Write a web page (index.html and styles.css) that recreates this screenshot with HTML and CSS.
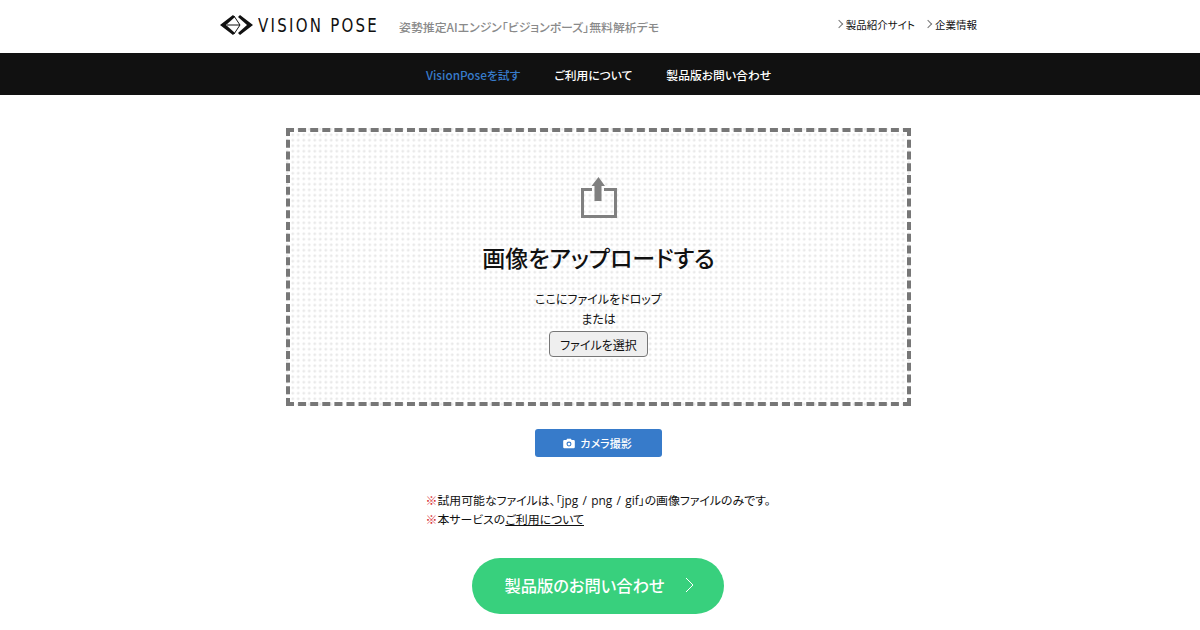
FILE: index.html
```html
<!DOCTYPE html>
<html lang="ja">
<head>
    <meta charset="UTF-8">
    <meta name="viewport" content="width=device-width, initial-scale=1.0">
    <title>VisionPose 無料解析デモ</title>
    <link rel="stylesheet" href="styles.css">
</head>
<body>
    <header class="site-header">
        <div class="header-inner">
            <a class="logo" href="#">
                <svg class="logo-mark" width="33" height="22" viewBox="0 0 33 22">
                    <path d="M0 11 L13 1 L15 3 L6 11 L15 19 L13 21 Z" fill="#111"/>
                    <path d="M20 1 L33 11 L20 21 L18 19 L27 11 L18 3 Z" fill="#111"/>
                    <path d="M14 2 L20 11 L14 20 M7 11 H20" fill="none" stroke="#111" stroke-width="1"/>
                </svg>
                <span class="logo-text">VISION POSE</span>
            </a>
            <p class="tagline">姿勢推定AIエンジン「ビジョンポーズ」無料解析デモ</p>
            <ul class="sub-links">
                <li><a href="#">製品紹介サイト</a></li>
                <li><a href="#">企業情報</a></li>
            </ul>
        </div>
    </header>

    <nav class="global-nav">
        <a class="current" href="#">VisionPoseを試す</a>
        <a href="#">ご利用について</a>
        <a href="#">製品版お問い合わせ</a>
    </nav>

    <main class="content">
        <section class="dropzone">
            <svg class="upload-icon" width="36" height="41" viewBox="0 0 36 41">
                <path d="M11 12.500 H1.500 V39.500 H34.500 V12.500 H23" fill="none" stroke="#808080" stroke-width="3"/>
                <path d="M17.500 0 L24 9 H20.500 V24 H13.500 V9 H10.500 Z" fill="#808080"/>
            </svg>
            <h1>画像をアップロードする</h1>
            <p class="drop-text">ここにファイルをドロップ</p>
            <p class="drop-text">または</p>
            <button class="file-button" type="button">ファイルを選択</button>
        </section>

        <button class="camera-button" type="button">
            <svg width="12" height="11" viewBox="0 0 13 11">
                <path fill-rule="evenodd" fill="#fff" d="M1.500 1.800 H3.600 L4.500 0.300 H8.500 L9.400 1.800 H11.500 A1.300 1.300 0 0 1 12.800 3.100 V9.400 A1.300 1.300 0 0 1 11.500 10.700 H1.500 A1.300 1.300 0 0 1 0.200 9.400 V3.100 A1.300 1.300 0 0 1 1.500 1.800 Z M6.500 3.400 A2.700 2.700 0 1 0 6.500 8.800 A2.700 2.700 0 1 0 6.500 3.400 Z M6.500 4.600 A1.500 1.500 0 1 1 6.500 7.600 A1.500 1.500 0 1 1 6.500 4.600 Z"/>
            </svg>
            カメラ撮影
        </button>

        <ul class="notes">
            <li><span class="mark">※</span>試用可能なファイルは、「jpg / png / gif」の画像ファイルのみです。</li>
            <li><span class="mark">※</span>本サービスの<a href="#">ご利用について</a></li>
        </ul>

        <a class="contact-button" href="#">
            製品版のお問い合わせ
            <svg width="9" height="16" viewBox="0 0 9 16">
                <path d="M1 1 L8 8 L1 15" fill="none" stroke="#fff" stroke-width="1"/>
            </svg>
        </a>
    </main>
</body>
</html>
```

FILE: styles.css
```css
* {
    box-sizing: border-box;
}

body {
    font-family: "Noto Sans CJK JP", "Noto Sans", sans-serif;
    font-feature-settings: "palt";
    margin: 0;
    padding: 0;
    background: #fff;
    color: #111;
    height: 630px;
    overflow: hidden;
}

a {
    color: inherit;
    text-decoration: none;
}

.site-header {
    height: 53px;
    padding-right: 3px;
}

.header-inner {
    width: 757px;
    height: 100%;
    margin: 0 auto;
    display: flex;
    align-items: center;
}

.logo {
    display: flex;
    align-items: center;
    gap: 5px;
    width: 179px;
    margin-top: -3px;
}

.logo-mark {
    flex: none;
}

.logo-text {
    font-family: "DejaVu Sans", sans-serif;
    font-size: 20px;
    font-weight: 400;
    letter-spacing: 3px;
    line-height: 22px;
    width: 120px;
    white-space: nowrap;
    transform: scaleX(0.75);
    transform-origin: left center;
}

.tagline {
    margin: 0;
    font-size: 11.900px;
    font-weight: 500;
    color: #8a8a8a;
    white-space: nowrap;
}

.sub-links {
    list-style: none;
    margin: -5px 0 0 auto;
    padding: 0;
    display: flex;
    gap: 10px;
    font-size: 10.500px;
}

.sub-links a::before {
    content: '';
    display: inline-block;
    width: 5px;
    height: 5px;
    margin: 0 4px 2px 0;
    border-top: 1px solid #777;
    border-right: 1px solid #777;
    transform: rotate(45deg);
}

.global-nav {
    height: 42px;
    background: #111;
    padding-right: 3px;
    display: flex;
    justify-content: center;
    align-items: center;
    gap: 34px;
    font-size: 11.800px;
    font-weight: 500;
    color: #fff;
}

.global-nav .current {
    color: #377bca;
}

.content {
    padding: 33px 3px 0 0;
    display: flex;
    flex-direction: column;
    align-items: center;
}

.dropzone {
    width: 625px;
    height: 278px;
    border: 4px dashed #777;
    background-color: #fff;
    background-image: radial-gradient(#e9e9e9 1.2px, transparent 1.6px);
    background-size: 5.500px 5.500px;
    display: flex;
    flex-direction: column;
    align-items: center;
    padding-top: 45px;
}

.dropzone h1 {
    margin: 23px 0 16px;
    font-size: 23px;
    font-weight: 500;
    line-height: 32px;
}

.drop-text {
    margin: 0;
    font-size: 12px;
    line-height: 20px;
}

.file-button {
    width: 99px;
    height: 26px;
    margin-top: 2px;
    padding: 0;
    border: 1px solid #777;
    border-radius: 4px;
    background: #efefef;
    color: #111;
    font-family: inherit;
    font-feature-settings: inherit;
    font-size: 12px;
}

.camera-button {
    width: 127px;
    height: 28px;
    margin-top: 23px;
    padding: 0 2px 0 0;
    border: none;
    border-radius: 3px;
    background: #377bca;
    color: #fff;
    font-family: inherit;
    font-feature-settings: inherit;
    font-size: 11px;
    font-weight: 500;
    display: flex;
    justify-content: center;
    align-items: center;
    gap: 5px;
}

.notes {
    list-style: none;
    width: 346px;
    margin: 34px 0 0;
    padding: 0;
    font-family: "Open Sans", "Noto Sans CJK JP", sans-serif;
    font-size: 11.900px;
    line-height: 19px;
    word-spacing: 1.200px;
}

.notes li {
    white-space: nowrap;
}

.notes .mark {
    color: #d6282b;
}

.notes a {
    text-decoration: underline;
}

.contact-button {
    width: 252px;
    height: 56px;
    margin: 29px 1px 0 0;
    padding: 0 0 2px 2px;
    border-radius: 28px;
    background: #38d07d;
    color: #fff;
    font-size: 16.300px;
    font-weight: 500;
    display: flex;
    justify-content: center;
    align-items: center;
    gap: 20px;
}
```
